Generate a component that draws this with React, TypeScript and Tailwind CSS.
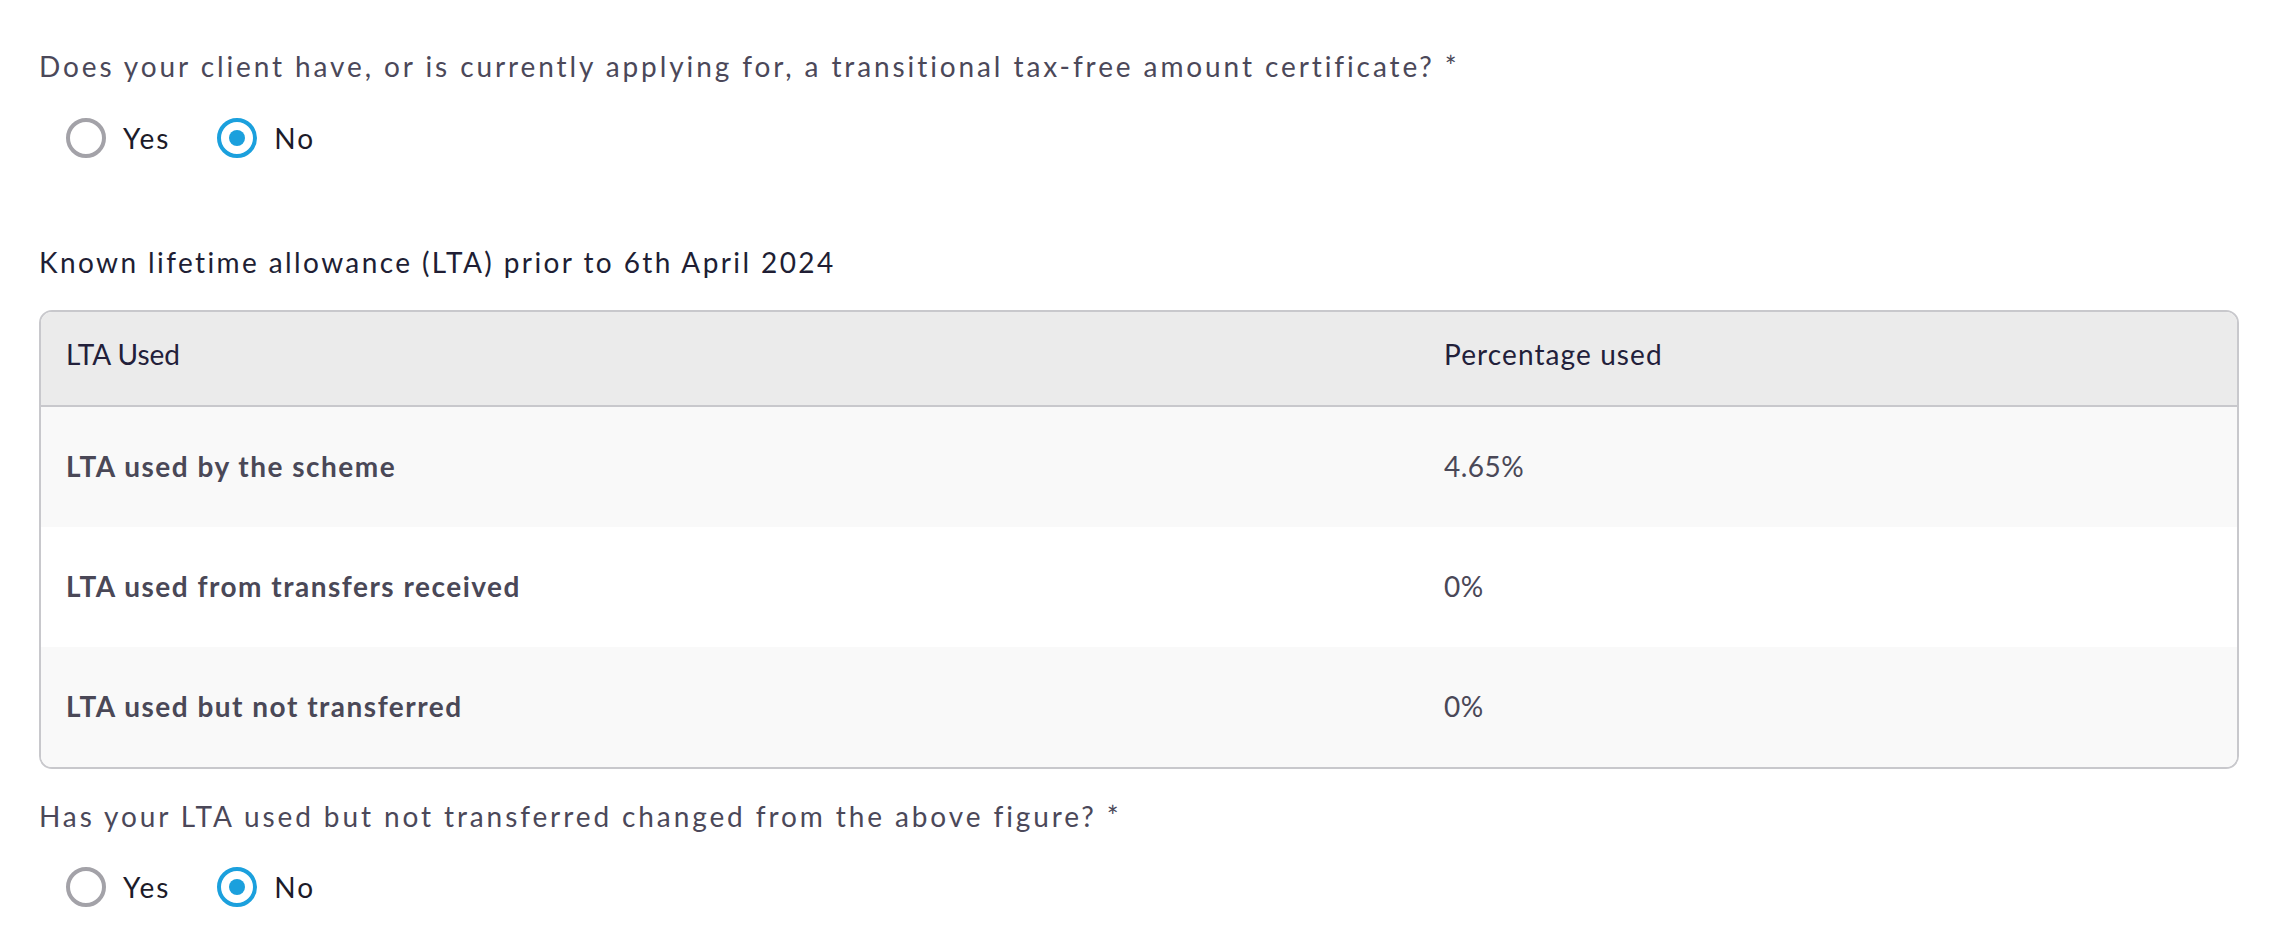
import React from "react";

const font = { fontFamily: "Lato, 'Open Sans', sans-serif" };

function Radio({ checked, label }: { checked: boolean; label: string }) {
  return (
    <div className="flex items-center">
      <span
        className={
          checked
            ? "flex h-[40px] w-[40px] items-center justify-center rounded-full border-[4px] border-[#1ba0dd]"
            : "flex h-[40px] w-[40px] items-center justify-center rounded-full border-[4px] border-[#a3a2a8]"
        }
      >
        {checked && <span className="h-[16px] w-[16px] rounded-full bg-[#1ba0dd]" />}
      </span>
      <span className="ml-[17px] text-[28px] leading-[36px] tracking-[2px] text-[#1c1b29]">{label}</span>
    </div>
  );
}

function RadioGroup() {
  return (
    <div className="flex items-center gap-[47px] pl-[27px]">
      <Radio checked={false} label="Yes" />
      <Radio checked={true} label="No" />
    </div>
  );
}

const rows = [
  { label: "LTA used by the scheme", value: "4.65%", bg: "bg-[#f9f9f9]" },
  { label: "LTA used from transfers received", value: "0%", bg: "bg-white" },
  { label: "LTA used but not transferred", value: "0%", bg: "bg-[#f9f9f9]" },
];

export default function App() {
  return (
    <div className="min-h-screen bg-white px-[39px] pt-[48px]" style={font}>
      <p className="text-[28px] leading-[36px] tracking-[2.9px] text-[#4b4859]">
        Does your client have, or is currently applying for, a transitional tax-free amount certificate? *
      </p>
      <div className="mt-[34px]">
        <RadioGroup />
      </div>

      <h2 className="mt-[86px] text-[28px] leading-[36px] tracking-[2.4px] text-[#201e34]">
        Known lifetime allowance (LTA) prior to 6th April 2024
      </h2>

      <div className="mt-[30px] overflow-hidden rounded-[13px] border-2 border-[#c8c8cc]">
        <div className="grid grid-cols-[1378px_1fr] border-b-2 border-[#c8c8cc] bg-[#ebebeb] px-[25px] pb-[33px] pt-[24px] text-[28px] leading-[36px] text-[#22203a]">
          <div>LTA Used</div>
          <div className="tracking-[1.1px]">Percentage used</div>
        </div>
        {rows.map((r) => (
          <div
            key={r.label}
            className={`grid h-[120px] grid-cols-[1378px_1fr] px-[25px] pt-[41px] text-[28px] leading-[36px] text-[#4a4857] ${r.bg}`}
          >
            <div className="font-bold tracking-[1.5px]">{r.label}</div>
            <div className="tracking-[0.5px]">{r.value}</div>
          </div>
        ))}
      </div>

      <p className="mt-[29px] text-[28px] leading-[36px] tracking-[2.9px] text-[#4b4859]">
        Has your LTA used but not transferred changed from the above figure? *
      </p>
      <div className="mt-[33px]">
        <RadioGroup />
      </div>
    </div>
  );
}
